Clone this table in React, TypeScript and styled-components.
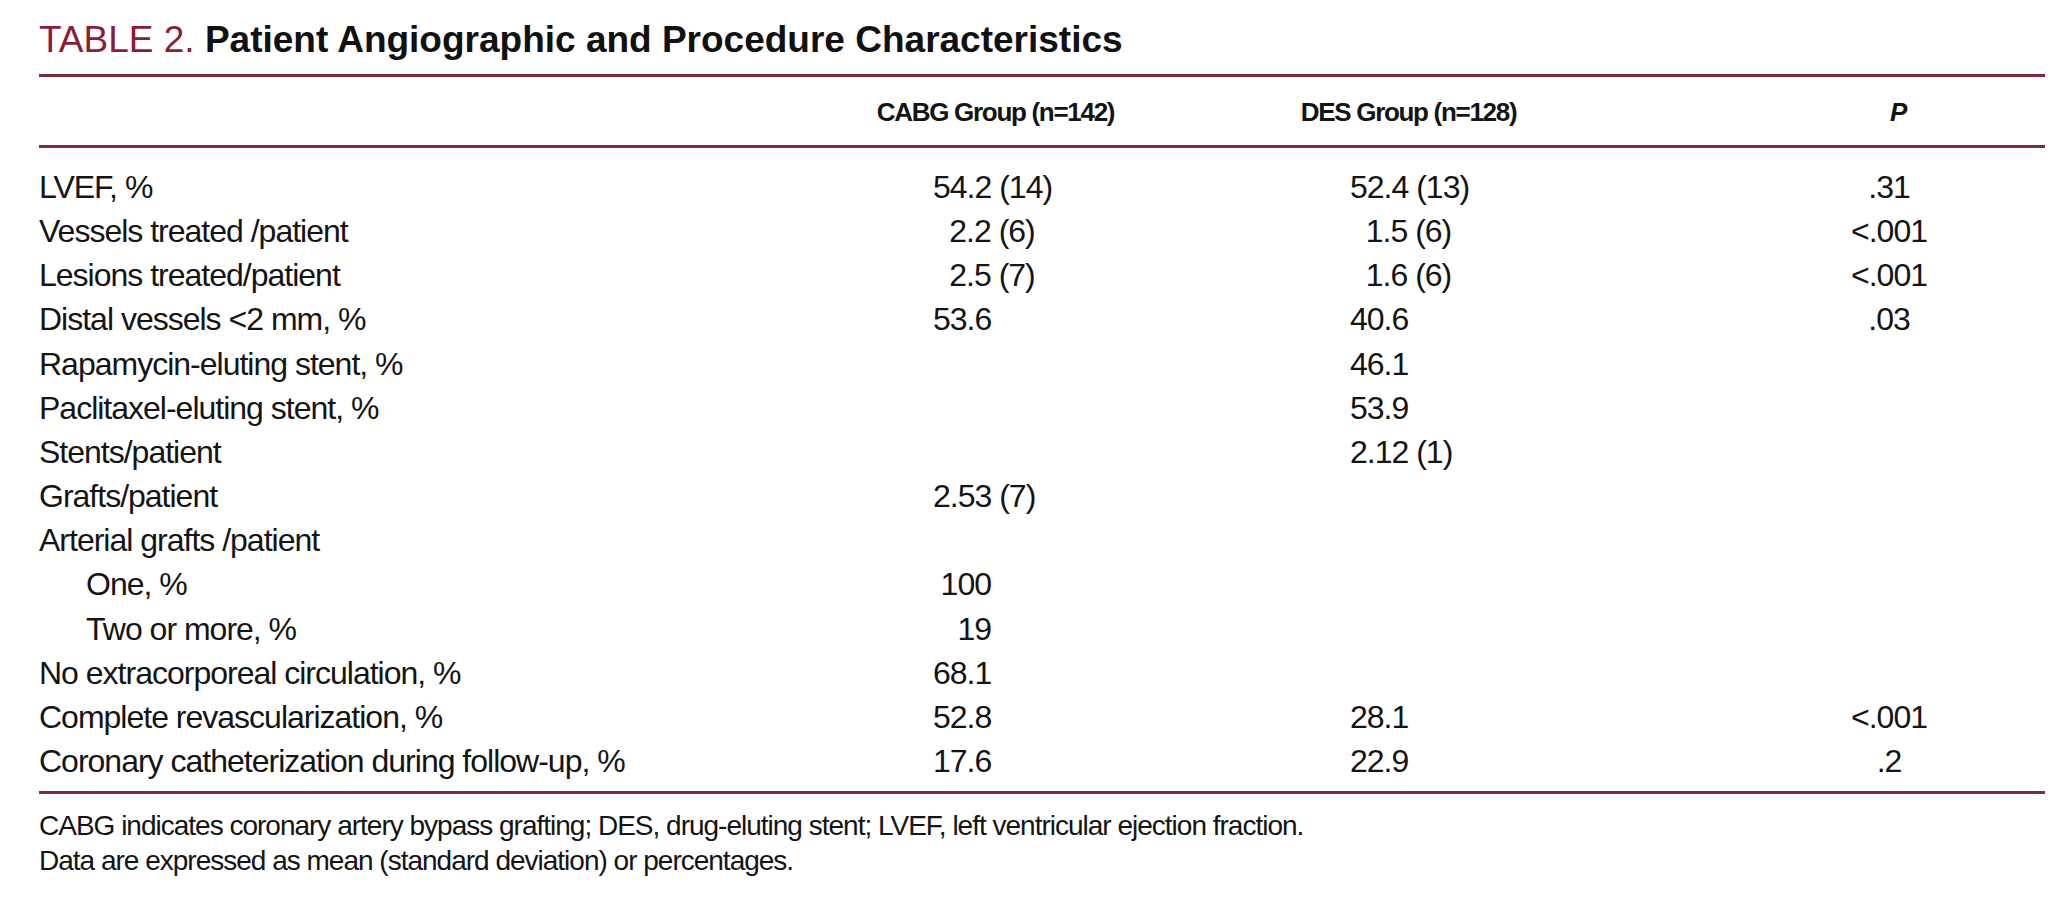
import React from 'react'
import styled, { createGlobalStyle } from 'styled-components'

const GlobalStyle = createGlobalStyle`
  html, body {
    margin: 0;
    padding: 0;
    background: #ffffff;
  }
  body {
    font-family: 'Liberation Sans', Arial, Helvetica, sans-serif;
    color: #141414;
  }
`

const Page = styled.div`
  width: 2006px;
  padding-left: 39px;
`

const Title = styled.h1`
  margin: 0 0 12px;
  padding-top: 18px;
  line-height: 44px;
  font-size: 37px;
  font-weight: normal;
  white-space: nowrap;
`

const TableNo = styled.span`
  color: #8d1d36;
`

const TableName = styled.span`
  font-weight: bold;
  color: #111111;
`

const Rule = styled.div`
  height: 3px;
  background: #7c2c3d;
`

const Grid = styled.div`
  display: grid;
  grid-template-columns: 894px 417px 400px 1fr;
`

// condensed look: the source font is a narrow grotesque, so tighten tracking
const HeaderRow = styled(Grid)`
  height: 65.3px;
  padding-top: 2.7px;
  line-height: 65.3px;
  font-size: 26px;
  font-weight: bold;
  letter-spacing: -1.3px;
`

const HeadCell = styled.div<{ $width: number; $italic?: boolean }>`
  display: flex;
  justify-content: center;
  width: ${({ $width }) => $width}px;
  white-space: nowrap;
  font-style: ${({ $italic }) => ($italic ? 'italic' : 'normal')};
`

const Body = styled.div`
  padding: 16.8px 0 7.9px;
`

const Row = styled(Grid)`
  height: 44.2px;
  line-height: 44.2px;
  font-size: 32px;
  letter-spacing: -1px;
  white-space: nowrap;
`

const Label = styled.div<{ $indent?: boolean }>`
  padding-left: ${({ $indent }) => ($indent ? 47 : 0)}px;
`

const Value = styled.div<{ $width: number; $align: string; $padRight?: number }>`
  width: ${({ $width }) => $width}px;
  text-align: ${({ $align }) => $align};
  padding-right: ${({ $padRight }) => $padRight || 0}px;
  box-sizing: border-box;
`

const Notes = styled.div`
  padding-top: 13.3px;
  font-size: 28px;
  line-height: 35px;
  letter-spacing: -1px;
  white-space: nowrap;
`

type Cell = { text: string; align?: 'center' | 'left' | 'right' }

type DataRow = {
  label: string
  indent?: boolean
  cabg?: Cell
  des?: Cell
  p?: string
}

const rows: DataRow[] = [
  { label: 'LVEF, %', cabg: { text: '54.2 (14)', align: 'center' }, des: { text: '52.4 (13)', align: 'center' }, p: '.31' },
  { label: 'Vessels treated /patient', cabg: { text: '2.2 (6)', align: 'center' }, des: { text: '1.5 (6)', align: 'center' }, p: '<.001' },
  { label: 'Lesions treated/patient', cabg: { text: '2.5 (7)', align: 'center' }, des: { text: '1.6 (6)', align: 'center' }, p: '<.001' },
  { label: 'Distal vessels <2 mm, %', cabg: { text: '53.6' }, des: { text: '40.6' }, p: '.03' },
  { label: 'Rapamycin-eluting stent, %', des: { text: '46.1' } },
  { label: 'Paclitaxel-eluting stent, %', des: { text: '53.9' } },
  { label: 'Stents/patient', des: { text: '2.12 (1)' } },
  { label: 'Grafts/patient', cabg: { text: '2.53 (7)' } },
  { label: 'Arterial grafts /patient' },
  { label: 'One, %', indent: true, cabg: { text: '100', align: 'right' } },
  { label: 'Two or more, %', indent: true, cabg: { text: '19', align: 'right' } },
  { label: 'No extracorporeal circulation, %', cabg: { text: '68.1' } },
  { label: 'Complete revascularization, %', cabg: { text: '52.8' }, des: { text: '28.1' }, p: '<.001' },
  { label: 'Coronary catheterization during follow-up, %', cabg: { text: '17.6' }, des: { text: '22.9' }, p: '.2' },
]

const App = (): JSX.Element => {
  return (
    <Page>
      <GlobalStyle />
      <Title>
        <TableNo>TABLE 2.</TableNo> <TableName>Patient Angiographic and Procedure Characteristics</TableName>
      </Title>
      <Rule />
      <HeaderRow>
        <div />
        <HeadCell $width={125}>CABG Group (n=142)</HeadCell>
        <HeadCell $width={117}>DES Group (n=128)</HeadCell>
        <HeadCell $width={296} $italic>
          P
        </HeadCell>
      </HeaderRow>
      <Rule />
      <Body>
        {rows.map((row) => (
          <Row key={row.label}>
            <Label $indent={row.indent}>{row.label}</Label>
            <Value
              $width={118}
              $align={row.cabg?.align || 'left'}
              $padRight={row.cabg?.align === 'right' ? 60 : 0}
            >
              {row.cabg?.text}
            </Value>
            <Value $width={117} $align={row.des?.align || 'left'}>
              {row.des?.text}
            </Value>
            <Value $width={278} $align="center">
              {row.p}
            </Value>
          </Row>
        ))}
      </Body>
      <Rule />
      <Notes>
        <div>CABG indicates coronary artery bypass grafting; DES, drug-eluting stent; LVEF, left ventricular ejection fraction.</div>
        <div>Data are expressed as mean (standard deviation) or percentages.</div>
      </Notes>
    </Page>
  )
}

export default App
